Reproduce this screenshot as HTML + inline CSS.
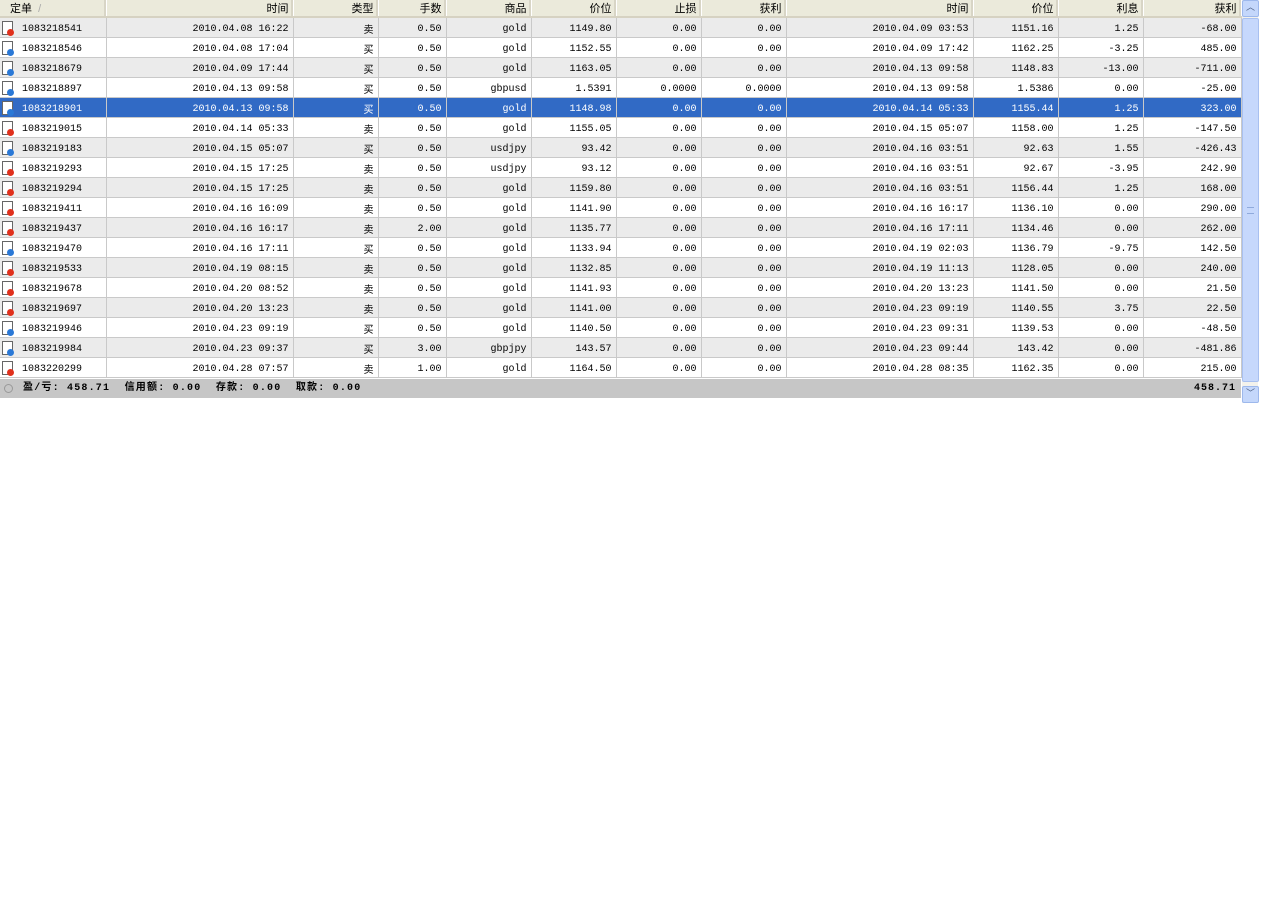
<!DOCTYPE html>
<html><head><meta charset="utf-8"><style>
body{margin:0;background:#fff;width:1261px;height:900px;overflow:hidden;font-family:"Liberation Mono","Noto Sans CJK SC",monospace;font-size:10px;color:#000}
.wrap{position:absolute;left:0;top:0;width:1241px}
table{border-collapse:collapse;table-layout:fixed;width:1241px}
td,th{padding:0 4px 0 0;text-align:right;white-space:nowrap;overflow:hidden}
th{height:16px;background:#ebeadb;font-weight:normal;border-right:1px solid #fff;border-bottom:2px solid #d6d2c2;font-family:"Liberation Sans","Noto Sans CJK SC",sans-serif;font-size:11px;box-shadow:inset -2px 0 0 #d8d5c6}
td{height:19px;line-height:19px;vertical-align:middle;border-right:1px solid #c9c9c9;border-bottom:1px solid #c9c9c9}
td>b{font-weight:normal;position:relative;top:2px}
td:nth-child(3)>b{top:4px}
tr.g td{background:#ebebeb}
tr.s td{background:#316ac5;color:#fff}
td.c0{text-align:left;padding-left:0;position:relative}
td.c0 span{position:absolute;left:22px;top:2px;line-height:19px}
.ic{position:absolute;left:2px;top:3px;width:9px;height:12px;border:1px solid #666;background:#fff}
.d{position:absolute;left:7px;top:11px;width:7px;height:7px;border-radius:50%}
.r{background:#e0301c}.b{background:#2a78d6}
.foot{position:absolute;left:0;top:379px;width:1241px;height:19px;background:#c6c6c6;font-weight:bold;font-family:"Liberation Mono","Noto Sans CJK SC",monospace;font-size:10px;line-height:19px}
.sb{position:absolute;left:1242px;top:0;width:16px;height:403px;background:#f3f2ec}
.btn{position:absolute;left:0;width:15px;height:15px;background:#c4d7fb;border:1px solid #9db8ec;border-radius:2px;color:#4d6185;font-size:9px;text-align:center;line-height:15px}
.th{position:absolute;left:0;top:18px;width:15px;height:362px;background:#c6d8fc;border:1px solid #a8c0f0;border-radius:2px}
</style></head><body>
<div class="wrap"><table>
<colgroup><col style="width:106px"><col style="width:187px"><col style="width:85px"><col style="width:68px"><col style="width:85px"><col style="width:85px"><col style="width:85px"><col style="width:85px"><col style="width:187px"><col style="width:85px"><col style="width:85px"><col style="width:98px"></colgroup>
<tr><th style="text-align:left;padding-left:10px">定单 &nbsp;<span style="color:#aaa">/</span></th><th>时间</th><th>类型</th><th>手数</th><th>商品</th><th>价位</th><th>止损</th><th>获利</th><th>时间</th><th>价位</th><th>利息</th><th>获利</th></tr>
<tr class="g"><td class="c0"><i class="ic"></i><i class="d r"></i><span>1083218541</span></td><td><b>2010.04.08 16:22</b></td><td><b>卖</b></td><td><b>0.50</b></td><td><b>gold</b></td><td><b>1149.80</b></td><td><b>0.00</b></td><td><b>0.00</b></td><td><b>2010.04.09 03:53</b></td><td><b>1151.16</b></td><td><b>1.25</b></td><td><b>-68.00</b></td></tr>
<tr><td class="c0"><i class="ic"></i><i class="d b"></i><span>1083218546</span></td><td><b>2010.04.08 17:04</b></td><td><b>买</b></td><td><b>0.50</b></td><td><b>gold</b></td><td><b>1152.55</b></td><td><b>0.00</b></td><td><b>0.00</b></td><td><b>2010.04.09 17:42</b></td><td><b>1162.25</b></td><td><b>-3.25</b></td><td><b>485.00</b></td></tr>
<tr class="g"><td class="c0"><i class="ic"></i><i class="d b"></i><span>1083218679</span></td><td><b>2010.04.09 17:44</b></td><td><b>买</b></td><td><b>0.50</b></td><td><b>gold</b></td><td><b>1163.05</b></td><td><b>0.00</b></td><td><b>0.00</b></td><td><b>2010.04.13 09:58</b></td><td><b>1148.83</b></td><td><b>-13.00</b></td><td><b>-711.00</b></td></tr>
<tr><td class="c0"><i class="ic"></i><i class="d b"></i><span>1083218897</span></td><td><b>2010.04.13 09:58</b></td><td><b>买</b></td><td><b>0.50</b></td><td><b>gbpusd</b></td><td><b>1.5391</b></td><td><b>0.0000</b></td><td><b>0.0000</b></td><td><b>2010.04.13 09:58</b></td><td><b>1.5386</b></td><td><b>0.00</b></td><td><b>-25.00</b></td></tr>
<tr class="s"><td class="c0"><i class="ic"></i><i class="d b"></i><span>1083218901</span></td><td><b>2010.04.13 09:58</b></td><td><b>买</b></td><td><b>0.50</b></td><td><b>gold</b></td><td><b>1148.98</b></td><td><b>0.00</b></td><td><b>0.00</b></td><td><b>2010.04.14 05:33</b></td><td><b>1155.44</b></td><td><b>1.25</b></td><td><b>323.00</b></td></tr>
<tr><td class="c0"><i class="ic"></i><i class="d r"></i><span>1083219015</span></td><td><b>2010.04.14 05:33</b></td><td><b>卖</b></td><td><b>0.50</b></td><td><b>gold</b></td><td><b>1155.05</b></td><td><b>0.00</b></td><td><b>0.00</b></td><td><b>2010.04.15 05:07</b></td><td><b>1158.00</b></td><td><b>1.25</b></td><td><b>-147.50</b></td></tr>
<tr class="g"><td class="c0"><i class="ic"></i><i class="d b"></i><span>1083219183</span></td><td><b>2010.04.15 05:07</b></td><td><b>买</b></td><td><b>0.50</b></td><td><b>usdjpy</b></td><td><b>93.42</b></td><td><b>0.00</b></td><td><b>0.00</b></td><td><b>2010.04.16 03:51</b></td><td><b>92.63</b></td><td><b>1.55</b></td><td><b>-426.43</b></td></tr>
<tr><td class="c0"><i class="ic"></i><i class="d r"></i><span>1083219293</span></td><td><b>2010.04.15 17:25</b></td><td><b>卖</b></td><td><b>0.50</b></td><td><b>usdjpy</b></td><td><b>93.12</b></td><td><b>0.00</b></td><td><b>0.00</b></td><td><b>2010.04.16 03:51</b></td><td><b>92.67</b></td><td><b>-3.95</b></td><td><b>242.90</b></td></tr>
<tr class="g"><td class="c0"><i class="ic"></i><i class="d r"></i><span>1083219294</span></td><td><b>2010.04.15 17:25</b></td><td><b>卖</b></td><td><b>0.50</b></td><td><b>gold</b></td><td><b>1159.80</b></td><td><b>0.00</b></td><td><b>0.00</b></td><td><b>2010.04.16 03:51</b></td><td><b>1156.44</b></td><td><b>1.25</b></td><td><b>168.00</b></td></tr>
<tr><td class="c0"><i class="ic"></i><i class="d r"></i><span>1083219411</span></td><td><b>2010.04.16 16:09</b></td><td><b>卖</b></td><td><b>0.50</b></td><td><b>gold</b></td><td><b>1141.90</b></td><td><b>0.00</b></td><td><b>0.00</b></td><td><b>2010.04.16 16:17</b></td><td><b>1136.10</b></td><td><b>0.00</b></td><td><b>290.00</b></td></tr>
<tr class="g"><td class="c0"><i class="ic"></i><i class="d r"></i><span>1083219437</span></td><td><b>2010.04.16 16:17</b></td><td><b>卖</b></td><td><b>2.00</b></td><td><b>gold</b></td><td><b>1135.77</b></td><td><b>0.00</b></td><td><b>0.00</b></td><td><b>2010.04.16 17:11</b></td><td><b>1134.46</b></td><td><b>0.00</b></td><td><b>262.00</b></td></tr>
<tr><td class="c0"><i class="ic"></i><i class="d b"></i><span>1083219470</span></td><td><b>2010.04.16 17:11</b></td><td><b>买</b></td><td><b>0.50</b></td><td><b>gold</b></td><td><b>1133.94</b></td><td><b>0.00</b></td><td><b>0.00</b></td><td><b>2010.04.19 02:03</b></td><td><b>1136.79</b></td><td><b>-9.75</b></td><td><b>142.50</b></td></tr>
<tr class="g"><td class="c0"><i class="ic"></i><i class="d r"></i><span>1083219533</span></td><td><b>2010.04.19 08:15</b></td><td><b>卖</b></td><td><b>0.50</b></td><td><b>gold</b></td><td><b>1132.85</b></td><td><b>0.00</b></td><td><b>0.00</b></td><td><b>2010.04.19 11:13</b></td><td><b>1128.05</b></td><td><b>0.00</b></td><td><b>240.00</b></td></tr>
<tr><td class="c0"><i class="ic"></i><i class="d r"></i><span>1083219678</span></td><td><b>2010.04.20 08:52</b></td><td><b>卖</b></td><td><b>0.50</b></td><td><b>gold</b></td><td><b>1141.93</b></td><td><b>0.00</b></td><td><b>0.00</b></td><td><b>2010.04.20 13:23</b></td><td><b>1141.50</b></td><td><b>0.00</b></td><td><b>21.50</b></td></tr>
<tr class="g"><td class="c0"><i class="ic"></i><i class="d r"></i><span>1083219697</span></td><td><b>2010.04.20 13:23</b></td><td><b>卖</b></td><td><b>0.50</b></td><td><b>gold</b></td><td><b>1141.00</b></td><td><b>0.00</b></td><td><b>0.00</b></td><td><b>2010.04.23 09:19</b></td><td><b>1140.55</b></td><td><b>3.75</b></td><td><b>22.50</b></td></tr>
<tr><td class="c0"><i class="ic"></i><i class="d b"></i><span>1083219946</span></td><td><b>2010.04.23 09:19</b></td><td><b>买</b></td><td><b>0.50</b></td><td><b>gold</b></td><td><b>1140.50</b></td><td><b>0.00</b></td><td><b>0.00</b></td><td><b>2010.04.23 09:31</b></td><td><b>1139.53</b></td><td><b>0.00</b></td><td><b>-48.50</b></td></tr>
<tr class="g"><td class="c0"><i class="ic"></i><i class="d b"></i><span>1083219984</span></td><td><b>2010.04.23 09:37</b></td><td><b>买</b></td><td><b>3.00</b></td><td><b>gbpjpy</b></td><td><b>143.57</b></td><td><b>0.00</b></td><td><b>0.00</b></td><td><b>2010.04.23 09:44</b></td><td><b>143.42</b></td><td><b>0.00</b></td><td><b>-481.86</b></td></tr>
<tr><td class="c0"><i class="ic"></i><i class="d r"></i><span>1083220299</span></td><td><b>2010.04.28 07:57</b></td><td><b>卖</b></td><td><b>1.00</b></td><td><b>gold</b></td><td><b>1164.50</b></td><td><b>0.00</b></td><td><b>0.00</b></td><td><b>2010.04.28 08:35</b></td><td><b>1162.35</b></td><td><b>0.00</b></td><td><b>215.00</b></td></tr>
</table></div>
<div class="foot"><span style="position:absolute;left:4px;top:5px;width:7px;height:7px;border:1px solid #999;border-radius:50%"></span><span style="position:absolute;left:23px;letter-spacing:1.2px;white-space:pre">盈/亏: 458.71  信用额: 0.00  存款: 0.00  取款: 0.00</span><span style="position:absolute;right:5px;letter-spacing:1px">458.71</span></div>
<div class="sb"><div class="btn" style="top:0">︿</div><div class="th"><div style="position:absolute;left:4px;top:188px;width:7px;height:5px;border-top:1px solid #8faadc;border-bottom:1px solid #8faadc"></div></div><div class="btn" style="top:386px">﹀</div></div>
</body></html>
